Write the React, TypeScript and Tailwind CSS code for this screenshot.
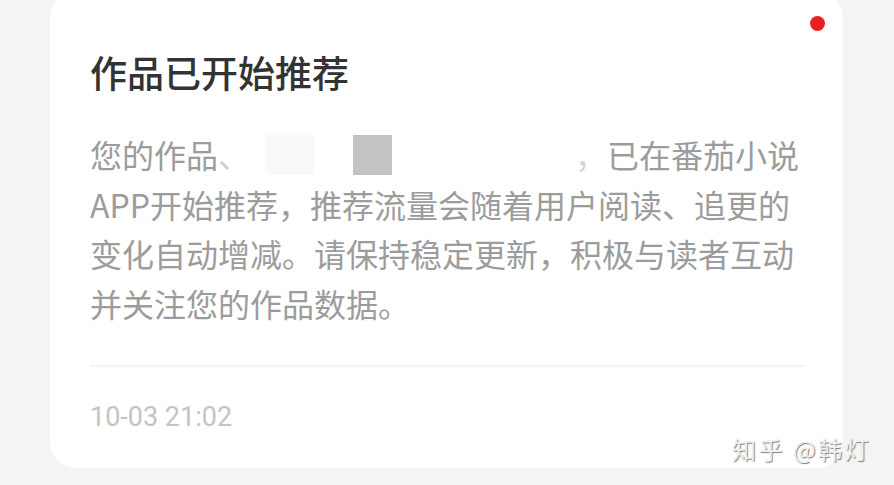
import React from 'react';

const cjk = { fontFamily: '"Noto Sans CJK SC", "Noto Sans", sans-serif' };

function RedactedTitle() {
  // the blurred-out work title in the first line
  return (
    <span className="flex w-[325px] h-[49px] items-center">
      <span className="w-[15px]" />
      <span className="w-[50px] h-[40px] bg-[#f9f9f9]" />
      <span className="w-[38px]" />
      <span className="w-[39px] h-[40px] bg-[#c3c3c3]" />
    </span>
  );
}

export default function App() {
  return (
    <div className="relative w-[894px] h-[485px] overflow-hidden bg-[#f4f4f4]" style={cjk}>
      <div className="relative -mt-[8px] ml-[50px] w-[793px] rounded-[26px] bg-white pl-[40px] pr-[38px] pt-[56px] pb-[36px]">
        <span className="absolute top-[24px] right-[18px] w-[15px] h-[15px] rounded-full bg-[#e8201f]" />

        <h1 className="text-[37px] leading-[48px] font-medium text-[#333333]">作品已开始推荐</h1>

        <div className="mt-[34px] text-[32px] leading-[49.5px] text-[#9c9c9c]">
          <div className="flex">
            <span>您的作品</span>
            <span className="text-[#cfcfcf]">、</span>
            <RedactedTitle />
            <span className="text-[#d6d6d6]">，</span>
            <span>已在番茄小说</span>
          </div>
          <p>APP开始推荐，推荐流量会随着用户阅读、追更的变化自动增减。请保持稳定更新，积极与读者互动并关注您的作品数据。</p>
        </div>

        <div className="mt-[37px] h-[2px] bg-[#f4f4f4]" />

        <div
          className="mt-[35px] text-[27px] leading-[30px] text-[#c4c4c4]"
          style={{ fontFamily: 'Roboto, "Liberation Sans", sans-serif' }}
        >
          10-03 21:02
        </div>
      </div>

      <div className="absolute left-[732px] top-[436px] text-[24px] leading-[26px] tracking-[2.5px] text-[#efefef] [text-shadow:1px_1px_1px_#808080]">
        知乎 @韩灯
      </div>
    </div>
  );
}
